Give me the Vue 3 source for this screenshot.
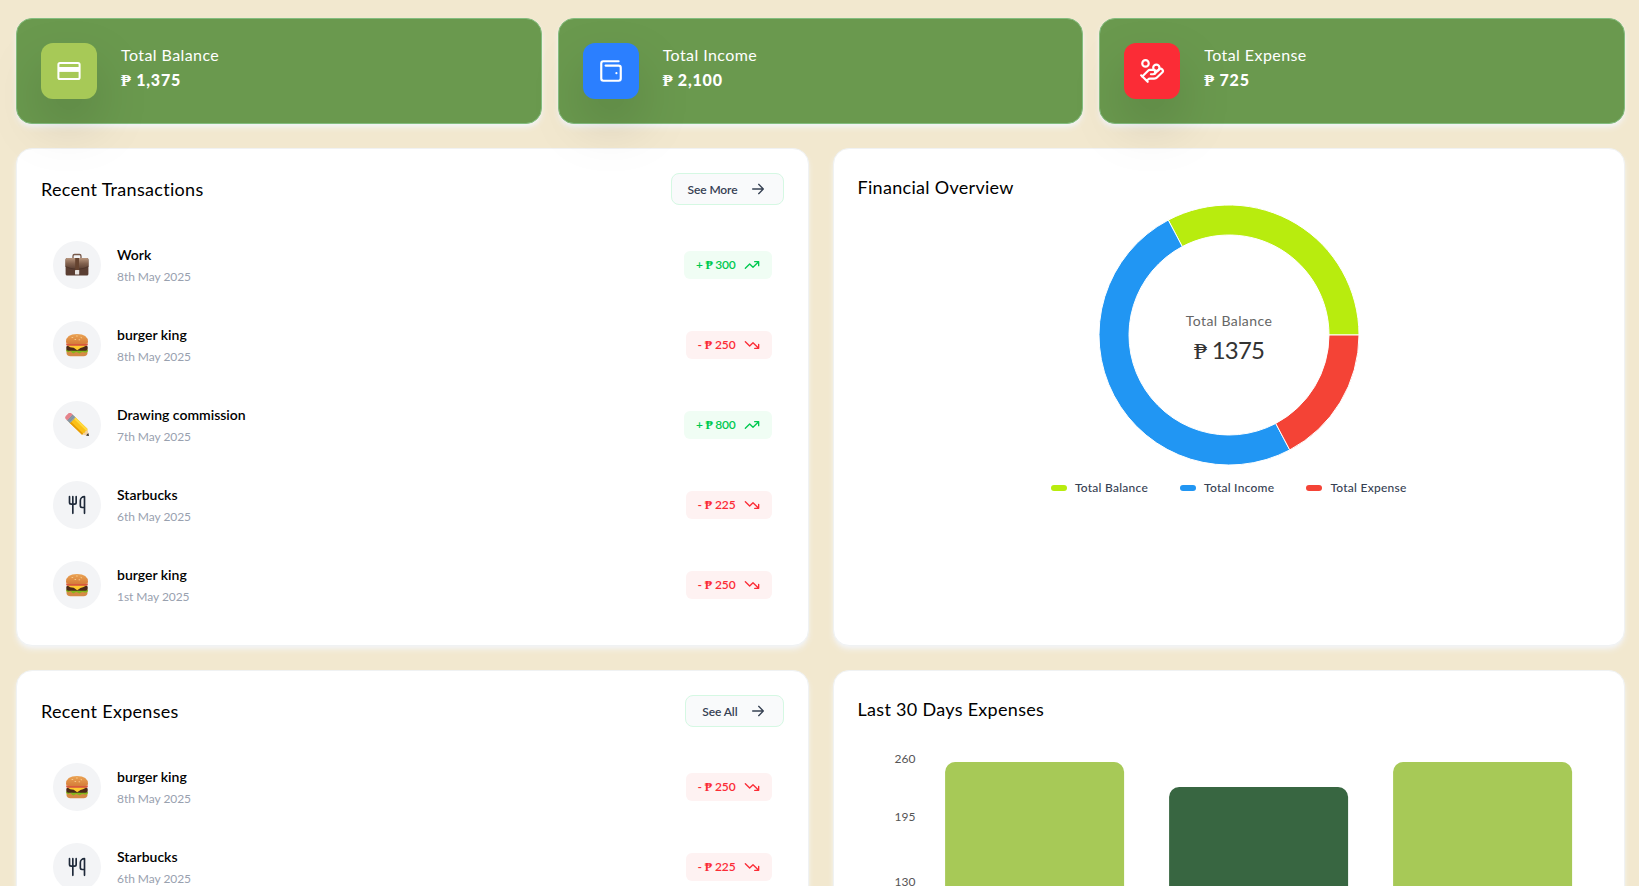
<script setup>
const summary = [
  { label: 'Total Balance', value: '1,375', icon: 'balance' },
  { label: 'Total Income', value: '2,100', icon: 'wallet' },
  { label: 'Total Expense', value: '725', icon: 'coins' },
]

const burger = { title: 'burger king', icon: 'burger', amount: 250, type: 'expense' }
const starbucks = { title: 'Starbucks', date: '6th May 2025', icon: 'utensils', amount: 225, type: 'expense' }

const lists = {
  transactions: [
    { title: 'Work', date: '8th May 2025', icon: 'briefcase', amount: 300, type: 'income' },
    { ...burger, date: '8th May 2025' },
    { title: 'Drawing commission', date: '7th May 2025', icon: 'pencil', amount: 800, type: 'income' },
    starbucks,
    { ...burger, date: '1st May 2025' },
  ],
  expenses: [
    { ...burger, date: '8th May 2025' },
    starbucks,
  ],
}

const panels = [
  { title: 'Recent Transactions', action: 'See More', rows: lists.transactions, chart: 'donut', chartTitle: 'Financial Overview' },
  { title: 'Recent Expenses', action: 'See All', rows: lists.expenses, chart: 'bars', chartTitle: 'Last 30 Days Expenses' },
]

const slices = [
  { name: 'Total Balance', value: 1375, color: '#b8ec0e' },
  { name: 'Total Income', value: 2100, color: '#2196f3' },
  { name: 'Total Expense', value: 725, color: '#f44336' },
]
const total = slices.reduce((sum, s) => sum + s.value, 0)
const point = (r, a) => `${(r * Math.cos(a)).toFixed(3)} ${(-r * Math.sin(a)).toFixed(3)}`
let angle = 0
const arcs = slices.map((s) => {
  const start = angle
  const end = (angle += (s.value / total) * Math.PI * 2)
  const large = end - start > Math.PI ? 1 : 0
  return {
    color: s.color,
    d: `M${point(130, start)}A130 130 0 ${large} 0 ${point(130, end)}L${point(100, end)}A100 100 0 ${large} 1 ${point(100, start)}Z`,
  }
})

const baseline = 269
const bars = [250, 225, 250].map((value, i) => ({
  x: 87.1 + i * 224,
  y: baseline - value,
  color: i % 2 ? '#386641' : '#a7c957',
}))
const ticks = [
  { label: '260', y: 20 },
  { label: '195', y: 78 },
  { label: '130', y: 143 },
]
</script>

<template>
  <main class="page">
    <section class="summary">
      <article v-for="s in summary" :key="s.label" class="card stat">
        <div class="stat-icon" :class="s.icon">
          <svg v-if="s.icon === 'balance'" viewBox="0 0 26 26" width="26" height="26">
            <rect x="2.400" y="4.900" width="21.200" height="16.200" rx="1.600" fill="none" stroke="#fff" stroke-width="2" />
            <path d="M2 9h22v4.900H2z" fill="#fff" />
          </svg>
          <svg v-else-if="s.icon === 'wallet'" class="line" viewBox="0 0 24 24" width="26" height="26">
            <path d="M17 14h.01M7 7h12a2 2 0 0 1 2 2v10a2 2 0 0 1-2 2H5a2 2 0 0 1-2-2V5a2 2 0 0 1 2-2h14" />
          </svg>
          <svg v-else class="line" viewBox="0 0 24 24" width="26" height="26">
            <path d="M11 15h2a2 2 0 1 0 0-4h-3c-.6 0-1.1.2-1.4.6L3 17" />
            <path d="m7 21 1.6-1.4c.3-.4.8-.6 1.4-.6h4c1.1 0 2.1-.4 2.8-1.2l4.6-4.4a2 2 0 0 0-2.75-2.91l-4.2 3.9M2 16l6 6" />
            <circle cx="16" cy="9" r="2.9" />
            <circle cx="6" cy="5" r="3" />
          </svg>
        </div>
        <div>
          <div class="stat-label">{{ s.label }}</div>
          <div class="stat-value"><span class="peso">₱</span> {{ s.value }}</div>
        </div>
      </article>
    </section>

    <section v-for="p in panels" :key="p.title" class="pair">
      <article class="card">
        <header class="head">
          <h5>{{ p.title }}</h5>
          <button class="more">
            {{ p.action }}
            <svg class="line" viewBox="0 0 24 24" width="16" height="16"><path d="M4 12h16M13 5l7 7-7 7" /></svg>
          </button>
        </header>
        <div class="rows">
          <div v-for="(r, i) in p.rows" :key="i" class="row">
            <div class="avatar">
              <svg v-if="r.icon === 'briefcase'" viewBox="0 0 24 24" width="24" height="24">
                <defs>
                  <linearGradient id="leather" x1="0" y1="0" x2="0" y2="1">
                    <stop offset="0" stop-color="#b8967e" />
                    <stop offset=".5" stop-color="#80604d" />
                    <stop offset="1" stop-color="#573c30" />
                  </linearGradient>
                </defs>
                <path d="M8 5V3.2Q8 1.600 9.500 1.500h5Q16 1.600 16 3.200V5" fill="none" stroke="#77594a" stroke-width="1.300" />
                <rect x=".6" y="5" width="22.800" height="17.400" rx="1.500" fill="#5a3e32" />
                <path d="M.4 7Q.4 5 2.200 5h19.600q1.800 0 1.800 2v6.500q-4 2.200-11.600 3Q4.500 15.700.4 13.500Z" fill="url(#leather)" />
                <path d="M.6 13.500q4 2.200 11.400 3 7.500-.8 11.400-3" fill="none" stroke="#452e25" stroke-width=".6" />
                <path d="M10.200 5h3.800v13h-3.800z" fill="#65432f" />
                <rect x="10" y="17" width="4.200" height="4.600" rx=".6" fill="#e8e4e0" />
              </svg>
              <svg v-else-if="r.icon === 'burger'" viewBox="0 0 24 24" width="24" height="24">
                <defs>
                  <linearGradient id="bun" x1="0" y1="0" x2="0" y2="1">
                    <stop offset="0" stop-color="#eba353" />
                    <stop offset="1" stop-color="#d67d3a" />
                  </linearGradient>
                </defs>
                <path d="M1.500 18h21v2q0 3-4 3.200h-13q-4-.2-4-3.200Z" fill="#d58a45" />
                <path d="M1 16.500q1.800-.8 3.600.2t3.700 0 3.700 0 3.700 0 3.600 0 3.700-.2q.4 2-1.200 2.700-1.500.7-3 0t-3.100.5-3-.1-3.100.1-3-.5-3.100 0Q.6 18.500 1 16.500Z" fill="#83b71b" />
                <path d="M1.300 14q0-1.500 2-1.500h17.400q2 0 2 1.500v1.500q0 2.300-3 2.300H4.300q-3 0-3-2.300Z" fill="#4b2817" />
                <path d="M2 12.300h20l-4 2-2.500.6-3.300 2.300-3.500-2.400-3.500-.5Z" fill="#ffc82e" />
                <path d="M1.200 10.500h21.600v1.300q0 1-1.500 1H2.700q-1.500 0-1.500-1Z" fill="#d9583c" />
                <path d="M1 9Q1 1 12 1t11 8q0 2-2.500 2h-17Q1 11 1 9Z" fill="url(#bun)" />
                <path d="M7 4.500h.8M11.500 3h.8M16 4.500l.7.300M10 6.500h.7M14 6.800h.7" stroke="#ffe0a2" stroke-width=".7" stroke-linecap="round" />
              </svg>
              <svg v-else-if="r.icon === 'pencil'" viewBox="0 0 24 24" width="24" height="24">
                <g transform="translate(2.700 1) rotate(44)">
                  <path d="M5-4h19.500l6 4-6 4H5Z" transform="translate(0 1)" fill="#f3d1a0" />
                  <path d="M7-3h17.300l1 1.300-.8 1.400.8 1.500-.8 1.400.3 2.400H7Z" fill="#fbc017" />
                  <path d="M7-3h17.300l1 1.300-.8.900H7Z" fill="#ffda3f" />
                  <path d="M7 3.300h17.600l.2 1.700H7Z" fill="#e59a05" />
                  <path d="M3.500-3H8v8H3.500Z" fill="#8fa0ae" />
                  <path d="M4.700-3v8M6.300-3v8" stroke="#667986" stroke-width=".5" />
                  <path d="M4-3H2.500Q0-3 0-.5v3Q0 5 2.500 5H4Z" fill="#e5838b" />
                  <path d="m28-.7 2.500 1.700-2.500 1.700Z" fill="#2e3033" />
                </g>
              </svg>
              <svg v-else class="line" viewBox="0 0 24 24" width="20" height="20">
                <path d="M3 2v7c0 1.100.9 2 2 2h4a2 2 0 0 0 2-2V2M7 2v20M21 15V2a5 5 0 0 0-5 5v6c0 1.100.9 2 2 2h3Zm0 0v7" />
              </svg>
            </div>
            <div class="info">
              <div class="name">{{ r.title }}</div>
              <div class="date">{{ r.date }}</div>
            </div>
            <div class="pill" :class="r.type">
              <span>{{ r.type === 'income' ? '+' : '-' }} <span class="peso">₱</span> {{ r.amount }}</span>
              <svg class="line" viewBox="0 0 24 24" width="16" height="16">
                <path v-if="r.type === 'income'" d="M22 7l-8.500 8.500-5-5L2 17M16 7h6v6" />
                <path v-else d="M22 17l-8.500-8.500-5 5L2 7M16 17h6v-6" />
              </svg>
            </div>
          </div>
        </div>
      </article>

      <article class="card">
        <h5>{{ p.chartTitle }}</h5>
        <template v-if="p.chart === 'donut'">
          <svg class="donut" viewBox="-132 -132 264 264" width="264" height="264">
            <path v-for="a in arcs" :key="a.color" :d="a.d" :fill="a.color" stroke="#fff" />
            <text class="donut-label" y="-9" text-anchor="middle">Total Balance</text>
            <text class="donut-value" y="24" text-anchor="middle"><tspan class="peso">₱</tspan> 1375</text>
          </svg>
          <ul class="legend">
            <li v-for="s in slices" :key="s.name">
              <i :style="{ background: s.color }"></i>{{ s.name }}
            </li>
          </ul>
        </template>
        <svg v-else class="bars" width="100%" height="300">
          <text v-for="t in ticks" :key="t.label" x="57.500" :y="t.y" text-anchor="end">{{ t.label }}</text>
          <rect v-for="b in bars" :key="b.x" :x="b.x" :y="b.y" width="179" height="280" rx="10" :fill="b.color" />
        </svg>
      </article>
    </section>
  </main>
</template>

<style>
body {
  margin: 0;
  overflow: hidden;
  background: #f2e8cf;
}
</style>

<style scoped>
.page {
  box-sizing: border-box;
  height: 886px;
  overflow: hidden;
  padding: 18px 14px 0 16px;
  background: #f2e8cf;
  font-family: Lato, "Noto Sans", sans-serif;
  color: #000;
}
.summary {
  display: grid;
  grid-template-columns: repeat(3, 1fr);
  gap: 16px;
}
.pair {
  display: grid;
  grid-template-columns: repeat(2, minmax(0, 1fr));
  gap: 24px;
  margin-top: 24px;
}
.card {
  box-sizing: border-box;
  padding: 24px;
  border: 1px solid #f0f2f3;
  border-radius: 16px;
  background: #fff;
  box-shadow: 0 4px 6px -1px #f3f4f6, 0 2px 4px -2px #f3f4f6;
}
.stat {
  display: flex;
  gap: 24px;
  height: 106px;
  border-color: #84bd7f;
  background: #6a994e;
  color: #fff;
}
.stat-icon {
  display: flex;
  align-items: center;
  justify-content: center;
  width: 56px;
  height: 56px;
  border-radius: 12px;
  filter: drop-shadow(0 25px 25px rgba(0, 0, 0, 0.13));
}
.stat-icon.balance { background: #a7c957; }
.stat-icon.wallet { background: #2b7fff; }
.stat-icon.coins { background: #fb2c36; }
.line {
  fill: none;
  stroke: currentColor;
  stroke-width: 2;
  stroke-linecap: round;
  stroke-linejoin: round;
  flex: none;
}
.stat-label {
  height: 24px;
  font-size: 16px;
  line-height: 24px;
  letter-spacing: 0.42px;
}
.stat-value {
  font-size: 16px;
  font-weight: 900;
  line-height: 25px;
  letter-spacing: 0.8px;
}
.peso {
  font-family: "Liberation Serif", serif;
}
h5 {
  margin: 0;
  font-size: 18px;
  font-weight: 400;
  line-height: 28px;
  letter-spacing: 0.3px;
}
.head {
  display: flex;
  align-items: center;
  justify-content: space-between;
  height: 32px;
}
.more {
  display: flex;
  align-items: center;
  gap: 12px;
  box-sizing: border-box;
  height: 32px;
  padding: 0 17px 0 16px;
  border: 1px solid #d5f8e3;
  border-radius: 8px;
  background: #f9fafb;
  color: #364153;
  font: 600 12px Lato, sans-serif;
  letter-spacing: -0.1px;
}
.rows {
  display: grid;
  gap: 8px;
  margin-top: 24px;
}
.row {
  display: flex;
  align-items: center;
  gap: 16px;
  height: 72px;
  padding: 0 12px;
}
.avatar {
  display: flex;
  align-items: center;
  justify-content: center;
  width: 48px;
  height: 48px;
  border-radius: 50%;
  background: #f3f4f6;
  color: #1e2939;
}
.info {
  flex: 1;
}
.name {
  font-size: 14px;
  font-weight: 600;
  line-height: 20px;
}
.date {
  margin-top: 4px;
  color: #99a1af;
  font-size: 12px;
  line-height: 16px;
  letter-spacing: -0.05px;
}
.pill {
  display: flex;
  align-items: center;
  gap: 8px;
  height: 28px;
  padding: 0 12px;
  border-radius: 6px;
  font-size: 12px;
  font-weight: 600;
  letter-spacing: -0.1px;
}
.income { background: #f0fdf4; color: #00c950; letter-spacing: -0.25px; }
.expense { background: #fef2f2; color: #fb2c36; }
.donut {
  display: block;
  margin: 2px auto 0;
}
.donut-label {
  fill: #666;
  font-size: 14px;
  letter-spacing: 0.4px;
}
.donut-value {
  fill: #333;
  font-size: 24px;
  letter-spacing: -0.8px;
}
.legend {
  display: flex;
  justify-content: center;
  gap: 32px;
  margin: 13px 0 0;
  padding: 0;
  list-style: none;
  color: #364153;
  font-size: 12px;
  font-weight: 500;
  line-height: 16px;
  letter-spacing: 0.25px;
}
.legend li {
  display: flex;
  align-items: center;
  gap: 8px;
}
.legend i {
  width: 16px;
  height: 6px;
  border-radius: 3px;
}
.bars {
  display: block;
  margin-top: 20px;
}
.bars text {
  fill: #555;
  font-size: 12px;
}
</style>
